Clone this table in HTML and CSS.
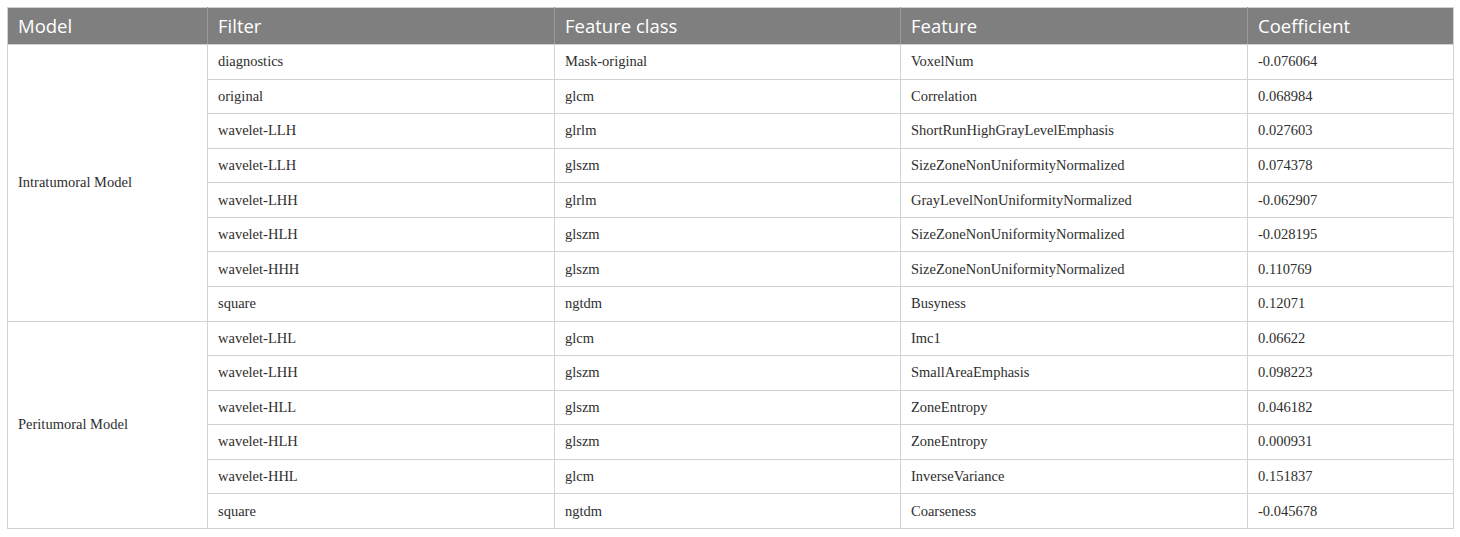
FILE: index.html
```html
<!DOCTYPE html>
<html>
<head>
<meta charset="utf-8">
<link rel="stylesheet" href="styles.css">
</head>
<body>
<table class="data">
<colgroup>
<col class="c1"><col class="c2"><col class="c3"><col class="c4"><col class="c5">
</colgroup>
<thead>
<tr><th>Model</th><th>Filter</th><th>Feature class</th><th>Feature</th><th>Coefficient</th></tr>
</thead>
<tbody>
<tr><td rowspan="8">Intratumoral Model</td><td>diagnostics</td><td>Mask-original</td><td>VoxelNum</td><td>-0.076064</td></tr>
<tr><td>original</td><td>glcm</td><td>Correlation</td><td>0.068984</td></tr>
<tr><td>wavelet-LLH</td><td>glrlm</td><td>ShortRunHighGrayLevelEmphasis</td><td>0.027603</td></tr>
<tr><td>wavelet-LLH</td><td>glszm</td><td>SizeZoneNonUniformityNormalized</td><td>0.074378</td></tr>
<tr><td>wavelet-LHH</td><td>glrlm</td><td>GrayLevelNonUniformityNormalized</td><td>-0.062907</td></tr>
<tr><td>wavelet-HLH</td><td>glszm</td><td>SizeZoneNonUniformityNormalized</td><td>-0.028195</td></tr>
<tr><td>wavelet-HHH</td><td>glszm</td><td>SizeZoneNonUniformityNormalized</td><td>0.110769</td></tr>
<tr><td>square</td><td>ngtdm</td><td>Busyness</td><td>0.12071</td></tr>
<tr><td rowspan="6">Peritumoral Model</td><td>wavelet-LHL</td><td>glcm</td><td>Imc1</td><td>0.06622</td></tr>
<tr><td>wavelet-LHH</td><td>glszm</td><td>SmallAreaEmphasis</td><td>0.098223</td></tr>
<tr><td>wavelet-HLL</td><td>glszm</td><td>ZoneEntropy</td><td>0.046182</td></tr>
<tr><td>wavelet-HLH</td><td>glszm</td><td>ZoneEntropy</td><td>0.000931</td></tr>
<tr><td>wavelet-HHL</td><td>glcm</td><td>InverseVariance</td><td>0.151837</td></tr>
<tr><td>square</td><td>ngtdm</td><td>Coarseness</td><td>-0.045678</td></tr>
</tbody>
</table>
</body>
</html>
```
FILE: styles.css
```css
html, body {
  margin: 0;
  padding: 0;
  background: #ffffff;
}
body {
  padding: 7px 0 0 7px;
}
.data {
  border-collapse: collapse;
  table-layout: fixed;
  width: 1446px;
  border: 1px solid #d2d2d2;
}
.c1 { width: 200px; }
.c2 { width: 347px; }
.c3 { width: 346px; }
.c4 { width: 347px; }
.c5 { width: 206px; }
.data th {
  background: #7f7f7f;
  color: #ffffff;
  font-family: "Open Sans", "Noto Sans", sans-serif;
  font-weight: 400;
  font-size: 18.5px;
  line-height: 24px;
  text-align: left;
  height: 36px;
  padding: 0 10px;
  border-left: 1px solid #9a9a9a;
  border-bottom: 1px solid #d2d2d2;
  vertical-align: middle;
}
.data th:first-child {
  border-left: none;
}
.data td {
  font-family: "Liberation Serif", "DejaVu Serif", serif;
  font-size: 14.5px;
  color: #2e2e2e;
  height: 34.57px;
  padding: 0 10px;
  border: 1px solid #d2d2d2;
  vertical-align: middle;
  box-sizing: border-box;
}
```
